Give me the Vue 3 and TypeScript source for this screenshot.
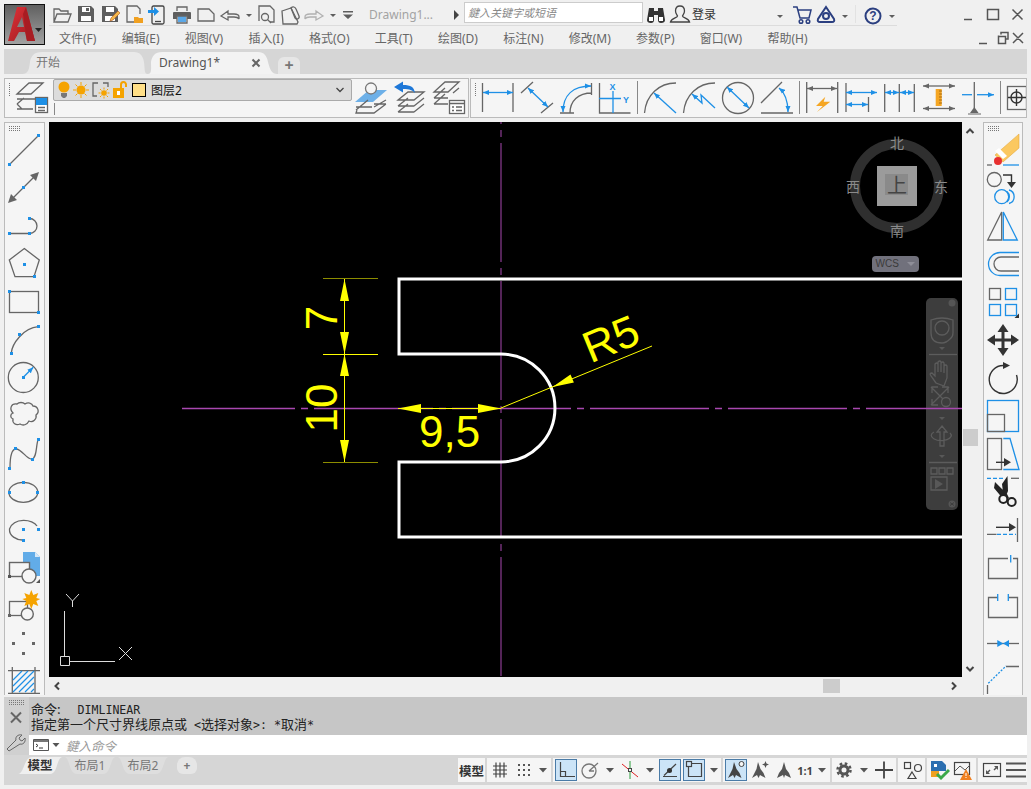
<script setup lang="ts">
const menus = ['文件(F)', '编辑(E)', '视图(V)', '插入(I)', '格式(O)', '工具(T)', '绘图(D)', '标注(N)', '修改(M)', '参数(P)', '窗口(W)', '帮助(H)']
</script>

<template>
  <div class="app">
    <svg class="defs" width="0" height="0">
      <defs>
        <marker id="ah" markerUnits="userSpaceOnUse" markerWidth="6" markerHeight="6" refX="6" refY="3" orient="auto-start-reverse">
          <path d="M0 0.5L6 3L0 5.5z" fill="#1e90e6" />
        </marker>
        <marker id="ag" markerUnits="userSpaceOnUse" markerWidth="6" markerHeight="6" refX="6" refY="3" orient="auto-start-reverse">
          <path d="M0 0.5L6 3L0 5.5z" fill="#666" />
        </marker>
        <linearGradient id="red" x1="0" y1="0" x2="1" y2="1">
          <stop offset="0" stop-color="#e03238" />
          <stop offset="1" stop-color="#9c1a20" />
        </linearGradient>
      </defs>
    </svg>

    <div class="head">
      <div class="appbtn">
        <svg width="39" height="39" viewBox="0 0 39 39">
          <path fill="url(#red)" fill-rule="evenodd" d="M12 2h9l9 34h-8l-2-9h-6l-5 9H3zM17 12l-5 10h7z" />
          <path fill="#a81c22" d="M21 2l9 34h-8L18 9z" />
          <path fill="#222" d="M30 23h7l-3.500 4z" />
        </svg>
      </div>
      <div class="head-right">
        <div class="titlebar">
          <div class="tb-main">
            <svg class="q" viewBox="0 0 24 24"><path class="k" d="M4 20V7h5l2 2h7v3M4 20l3-8h14l-3 8z" /></svg>
            <svg class="q" viewBox="0 0 24 24"><path class="fk2" d="M4 4h13l3 3v13H4z" /><path fill="#fff" d="M8 5h8v5H8zM7 14h10v5H7z" /><path class="fk2" d="M12 6h3v3h-3z" /></svg>
            <svg class="q" viewBox="0 0 24 24"><path class="fk2" d="M4 4h13l3 3v13H4z" /><path fill="#fff" d="M8 5h8v5H8zM7 14h10v5H7z" /><path fill="#f5b84a" stroke="#b05a20" stroke-width=".6" d="M13 16l7-7 2 2-7 7-3 1z" /></svg>
            <svg class="q" viewBox="0 0 24 24"><path class="k" d="M13 20H5V4h10l3 3v5" /><path fill="#f0a020" d="M12 15h4l1 1h4v5h-9z" /></svg>
            <svg class="q" viewBox="0 0 24 24"><rect class="d1" x="6" y="4" width="12" height="18" rx="1.500" /><path class="d1" d="M9 19.500h6" /><path fill="#1e90e6" d="M2 8h6V5l5 4.500-5 4.500v-3H2z" /></svg>
            <svg class="q" viewBox="0 0 24 24"><path class="fk2" d="M4 10h16q1 0 1 1v6h-4v-3H7v3H3v-6q0-1 1-1z" /><path class="k" d="M7 9V5h10v4" /><path fill="#5aa8e8" d="M8 14h8v6H8z" /><path class="k" d="M7 14h10v7H7z" /></svg>
            <svg class="q" viewBox="0 0 24 24"><path class="k" d="M4 7h11l5 5v7H4z" /></svg>
            <svg class="q" viewBox="0 0 24 24"><path class="k" d="M3 14l7-5v3h6c3 0 5 1 5 3v2c-1-2-2-2-5-2h-6v3z" /></svg>
            <svg class="dd" viewBox="0 0 10 24"><path class="fk2" d="M2 12h6l-3 3z" /></svg>
            <svg class="q" viewBox="0 0 24 24"><path class="k" d="M5 19V4h11l4 4v12h-4" /><circle class="k" cx="11" cy="15" r="3.500" /><path class="k" d="M13.500 17.500l3.500 3.500" /></svg>
            <svg class="q" viewBox="0 0 24 24"><path class="k" d="M4 9l9-3 7 14-1 2H5z" /><path class="k" d="M13 6c2-2 4-1 5 1l3 7c1 3-3 4-4 2z" /></svg>
            <svg class="q faint" viewBox="0 0 24 24"><path class="k" d="M21 14l-7-5v3H8c-3 0-5 1-5 3v2c1-2 2-2 5-2h6v3z" /></svg>
            <svg class="dd" viewBox="0 0 10 24"><path class="fk2" d="M2 12h6l-3 3z" /></svg>
            <svg class="more" viewBox="0 0 16 24"><path class="fk2" d="M3 9h10v1.500H3zM3 12.500h10L8 17z" /></svg>
            <span class="doc-title">Drawing1...</span>
            <svg class="arrow" viewBox="0 0 10 24"><path fill="#444" d="M3 8l5 5-5 5z" /></svg>
            <div class="search">鍵入关键字或短语</div>
            <svg class="q ml1" viewBox="0 0 24 24"><path fill="#333" d="M5 6h5v3h4V6h5l2 12q0 3-4 3-3 0-3-3v-5h-4v5q0 3-3 3-4 0-4-3z" /><path fill="#fff" d="M5 15h4v4H5zM15 15h4v4h-4z" /></svg>
            <svg class="q" viewBox="0 0 24 24"><path class="d1" d="M12 4c-3 0-4.500 2-4.500 5 0 2.500 1.500 4 2 5 0 2-6 2-7 6h19c-1-4-7-4-7-6 .5-1 2-2.500 2-5 0-3-1.500-5-4.500-5z" /></svg>
            <span class="login">登录</span>
            <svg class="dd login-dd" viewBox="0 0 10 24"><path class="fk2" d="M2 13h6l-3 3z" /></svg>
            <svg class="q ml5" viewBox="0 0 24 24"><path class="n" d="M3 5h4l3 11h9l2-8H8" /><circle class="n" cx="11" cy="19.500" r="1.800" /><circle class="n" cx="18" cy="19.500" r="1.800" /></svg>
            <svg class="q" viewBox="0 0 24 24"><path class="n2" d="M12 5l8 12q1 3-2 3H6q-3 0-2-3z" /><circle class="n2" cx="12" cy="14" r="3" /></svg>
            <svg class="dd" viewBox="0 0 10 24"><path class="fk2" d="M2 13h6l-3 3z" /></svg>
            <span class="tb-sep"></span>
            <svg class="q" viewBox="0 0 24 24"><circle class="n2" cx="12" cy="14" r="7.500" /><text x="12" y="18" class="help">?</text></svg>
            <svg class="dd" viewBox="0 0 10 24"><path class="fk2" d="M2 13h6l-3 3z" /></svg>
          </div>
          <svg class="winbtns" width="137" height="26" viewBox="0 0 137 26">
            <path class="w" d="M67 19.500h8M90.500 9.500h11v10h-11zM115.500 9.500l10 10M125.500 9.500l-10 10" />
          </svg>
        </div>
        <div class="menubar">
          <span v-for="m in menus" :key="m" class="menu">{{ m }}</span>
          <svg class="mdi" width="54" height="23" viewBox="0 0 54 23">
            <path class="w" d="M4 17.500h8M23.500 10.500h7v7h-7zM23.500 10.500v-1M26 8.500v-2h7v6.500h-2.500M38 7l10 10M48 7l-10 10" />
          </svg>
        </div>
      </div>
    </div>

    <div class="tabs">
      <div class="tab tab-start">开始</div>
      <div class="tab tab-active">
        <span>Drawing1*</span>
        <svg class="tab-x" width="10" height="10" viewBox="0 0 10 10"><path d="M1.500 1.500l7 7M8.500 1.500l-7 7" stroke="#666" stroke-width="2" /></svg>
      </div>
      <div class="tab tab-plus">+</div>
    </div>

    <div class="toolbars">
      <div class="tpanel tp1">
        <span class="vgrip"></span>
        <svg class="big ml5" viewBox="0 0 32 36">
          <path class="k" d="M1 14L13 3h14L15 14zM1 19h14M1 24L8 18M15 19h4M1 29h16M1 24l5 5" />
          <rect class="kf" x="19.500" y="17.500" width="12" height="15" />
          <rect x="20" y="18" width="11" height="7" fill="#1e90e6" />
          <path class="k" d="M22 27.500h7M29 30.500h-7" />
        </svg>
        <div class="layer-col">
          <div class="combo">
            <svg width="12" height="18" viewBox="0 0 12 18"><circle cx="6" cy="6" r="5.500" fill="#f5a300" /><path fill="#777" d="M3 12h6v3l-2 2H5l-2-2z" /></svg>
            <svg width="16" height="18" viewBox="0 0 16 18"><circle cx="8" cy="9" r="4.500" fill="#f5a300" /><path d="M8 1v3M8 14v3M0 9h3M13 9h3M2.500 3.500l2 2M11.500 12.500l2 2M13.500 3.500l-2 2M4.500 12.500l-2 2" stroke="#f5a300" fill="none" /></svg>
            <svg width="18" height="18" viewBox="0 0 18 18"><path class="k" d="M6 2H1v13h4M11 2h5v4" /><circle cx="12" cy="12" r="2.800" fill="#f5a300" /><path d="M12 6.500v2M12 15.500v2M6.500 12h2M15.500 12h2M8 8l1.500 1.500M16 8l-1.500 1.500M8 16l1.500-1.500M16 16l-1.500-1.500" stroke="#f5a300" fill="none" /></svg>
            <svg width="14" height="18" viewBox="0 0 14 18"><rect x="0" y="7" width="11" height="10" fill="#f5a300" /><rect x="4" y="10" width="3" height="4" fill="#fff" /><path d="M8 7V3.500a2.500 2.500 0 0 1 5 0V6" stroke="#f5a300" stroke-width="2" fill="none" /></svg>
            <span class="swatch"></span>
            <span class="layer-name">图层2</span>
            <svg class="chev" width="10" height="8" viewBox="0 0 10 8"><path d="M1.500 2l3.500 3.500L8.500 2" stroke="#444" stroke-width="1.300" fill="none" /></svg>
          </div>
          <span class="combo-line"></span>
        </div>
        <svg class="big ml3" viewBox="0 0 32 36">
          <path d="M0 22L14 10h18L18 22z" fill="#6db0e8" />
          <circle cx="16" cy="8.500" r="5.500" fill="#f5f5f5" stroke="#777" stroke-width="1.300" />
          <path class="k" d="M1 30L13 20M19 24h12M31 24L19 33H1l1-3M1 27h16M19 27L31 20" />
        </svg>
        <svg class="big ml7" viewBox="0 0 32 36">
          <path class="k" d="M4 20L14 12h16L20 20H4zM4 26L14 18M20 26h-16M30 18L20 26M4 32L14 24M20 32H4M30 24L20 32" />
          <path d="M0 7l9-5.500v3.500c8 0 11 2 12 8-3-3-5-4-12-4v3.500z" fill="#1e78d8" />
        </svg>
        <svg class="big ml7" viewBox="0 0 32 36">
          <path class="k" d="M1 12L12 2h14L15 12zM1 18L12 8M15 18H1M26 8l-6 5M1 24L12 14M15 24H1" />
          <rect class="kf" x="16.500" y="20.500" width="15" height="13" />
          <path class="k" d="M16.500 23.500h15M19 27h2M23 27h6M19 30.500h2M23 30.500h6" />
        </svg>
      </div>

      <div class="tpanel tp2">
        <span class="vgrip"></span>
        <div class="dims">
          <svg class="big cell" viewBox="0 0 32 36"><path class="k" d="M0.500 3v29M31 3v29" /><path class="u" d="M1 12.500h30" marker-start="url(#ah)" marker-end="url(#ah)" /></svg>
          <svg class="big cell" viewBox="0 0 32 36"><path class="k" d="M0 13L12 2M20 33l12-10" /><path class="u" d="M7 8l20 19" marker-start="url(#ah)" marker-end="url(#ah)" /></svg>
          <svg class="big cell" viewBox="0 0 32 36"><path class="k" d="M0 33h14M31.500 3v12M10 33c0-12 8-20 22-20" /><path class="u" d="M3 32C3 15 13 6 31 6" marker-start="url(#ah)" marker-end="url(#ah)" /></svg>
          <svg class="big cell" viewBox="0 0 32 36"><path class="k" d="M0.500 3v30h31" /><path class="u" d="M14 11v22M0 18.500h22" /><text x="10.500" y="10" class="axis">X</text><text x="24" y="23" class="axis">Y</text></svg>
          <span class="bar"></span>
          <svg class="big cell" viewBox="0 0 32 36"><path class="k" d="M0.500 33C2 15 15 3 32 3" /><path class="u" d="M10 13l22 20" marker-start="url(#ah)" /></svg>
          <svg class="big cell" viewBox="0 0 32 36"><path class="k" d="M0.500 33C2 15 15 3 32 3" /><path class="u" d="M9 14l10 9-1-8 14 13" marker-start="url(#ah)" /></svg>
          <svg class="big cell" viewBox="0 0 32 36"><circle class="k" cx="16" cy="18" r="15.500" /><path class="u" d="M5 7l22 21" marker-start="url(#ah)" marker-end="url(#ah)" /></svg>
          <svg class="big cell" viewBox="0 0 32 36"><path class="k" d="M0 23L21 2M0 33h32" /><path class="u" d="M18 8c6 5 9 13 9 24" marker-start="url(#ah)" marker-end="url(#ah)" /></svg>
          <span class="bar"></span>
          <svg class="big cell" viewBox="0 0 32 36"><path class="k" d="M0.700 2v31M31.700 2v31" /><path class="k" d="M1 8.500h30" marker-start="url(#ag)" marker-end="url(#ag)" /><path d="M19.300 16.700L10 26h6.700L11 32l13.300-10.300h-6.600z" fill="#f5a623" /></svg>
          <svg class="big cell" viewBox="0 0 32 36"><path class="k" d="M1 3v29M23.500 17v15" /><path class="u" d="M1 12.500h31" marker-start="url(#ah)" marker-end="url(#ah)" /><path class="u" d="M1 24.500h22" marker-start="url(#ah)" marker-end="url(#ah)" /></svg>
          <svg class="big cell" viewBox="0 0 32 36"><path class="k" d="M0.700 4v28M15.300 4v28M30.300 4v28" /><path class="u" d="M1 12.500h14" marker-start="url(#ah)" marker-end="url(#ah)" /><path class="u" d="M16 12.500h14" marker-start="url(#ah)" marker-end="url(#ah)" /></svg>
          <svg class="big cell" viewBox="0 0 32 36"><path class="k" d="M0 6h32" marker-start="url(#ag)" marker-end="url(#ag)" /><path class="k" d="M0 28.500h32" marker-start="url(#ag)" marker-end="url(#ag)" /><rect x="12.700" y="9" width="6" height="17" fill="#f5a623" /><path d="M16 11h3M16 14h3M16 17h3M16 20h3M16 23h3" stroke="#a86a10" /></svg>
          <svg class="big cell" viewBox="0 0 32 36"><path class="k" d="M12.300 2v26" /><path class="u" d="M0 14.700h10" /><path class="u" d="M15 14.700h17" marker-end="url(#ah)" /><path d="M8 33l4.300-6 4.300 6zM6 33.500h13v1H6z" fill="#666" /></svg>
          <span class="bar"></span>
          <svg class="big cell" viewBox="0 0 32 36"><rect class="k" x="0.500" y="6.500" width="19" height="23" /><circle class="dk" cx="9.500" cy="17.500" r="5.500" /><path class="dk" d="M1 17.500h18M9.500 9v17" /></svg>
        </div>
      </div>
    </div>

    <div class="main">
      <div class="side side-left">
        <div class="grip"></div>
        <svg class="ti" viewBox="0 0 32 32"><path class="k" d="M1.500 30.500l29-29" /><path class="fu" d="M0 29h3v3H0zM29 0h3v3h-3z" /></svg>
        <svg class="ti" viewBox="0 0 32 32"><path class="k" d="M5 26L26 5" /><path class="fk" d="M0 31l3-9 6 6zM31 0l-3 9-6-6z" /><path class="fu" d="M14 14h3v3h-3z" /></svg>
        <svg class="ti" viewBox="0 0 32 32"><path class="k" d="M1 23.500h20.500M21.500 8.500a7.500 7.500 0 0 1 0 15" /><path class="fu" d="M0 22h3v3H0zM20 22h3v3h-3zM20 7h3v3h-3z" /></svg>
        <svg class="ti" viewBox="0 0 32 32"><path class="k" d="M16.300 0.500L31.300 12 26 28.700H7L1.300 12z" /><path class="fu" d="M15 15h3v3h-3zM25 27h3v3h-3z" /></svg>
        <svg class="ti" viewBox="0 0 32 32"><rect class="k" x="1.500" y="5.500" width="29" height="21" /><path class="fu" d="M0 4h3v3H0zM29 25h3v3h-3z" /></svg>
        <svg class="ti" viewBox="0 0 32 32"><path class="k" d="M3.300 29C4 20 15 4 30.300 2.700" /><path class="fu" d="M2 28h3v3H2zM10 9h3v3h-3zM29 1h3v3h-3z" /></svg>
        <svg class="ti" viewBox="0 0 32 32"><circle class="k" cx="15.300" cy="15.500" r="15" /><path class="u" d="M15.300 15.300l10-10" marker-end="url(#ah)" /><path class="fu" d="M14 14h3v3h-3z" /></svg>
        <svg class="ti" viewBox="0 0 32 32"><path class="k" d="M5 13C1 9 3 3 9 4c2-2 6-2 8 0 3-2 7-1 8 2 5 0 7 6 3 9 1 4-3 8-7 6-2 4-6 5-9 3-4 2-8-1-7-5-3-1-3-5 0-6z" /></svg>
        <svg class="ti" viewBox="0 0 32 32"><path class="k" d="M2 30C2 22 3 11 8 11c6 0 11 11 16 10 5-1 4-14 6-19" /><path class="fu" d="M0 29h3v3H0zM6 9h3v3H6zM23 20h3v3h-3zM29 0h3v3h-3z" /></svg>
        <svg class="ti" viewBox="0 0 32 32"><ellipse class="k" cx="15.300" cy="16.300" rx="14.500" ry="10" /><path class="fu" d="M14 5h3v3h-3zM0 15h3v3H0zM28 15h3v3h-3z" /></svg>
        <svg class="ti" viewBox="0 0 32 32"><path class="k" d="M29 12C25 5 6 3 1.500 15c-.5 7 7 11 13 11" /><path class="fu" d="M14 14h3v3h-3zM29 14h3v3h-3zM14 25h3v3h-3z" /></svg>
        <svg class="ti" viewBox="0 0 32 32"><path d="M15 0h12l5 5v19H15z" fill="#62ace8" /><path d="M27 0l5 5h-5z" fill="#d6e8f8" /><rect x="1.500" y="10.500" width="20" height="14" fill="#f5f5f5" stroke="#666" stroke-width="1.400" /><circle cx="21" cy="24" r="7" fill="#f5f5f5" stroke="#666" stroke-width="1.400" /><path fill="#555" d="M0 23h3v3H0zM32 27v4h-4z" /></svg>
        <svg class="ti" viewBox="0 0 32 32"><rect class="k" x="1.500" y="11.500" width="18" height="14" /><circle cx="19.300" cy="24" r="6" fill="#f5f5f5" stroke="#666" stroke-width="1.400" /><path d="M23.300 0l2 5 5-2-2 5 4 1-4 2 2 5-5-2-2 5-2-5-5 2 2-5-4-2 4-1-2-5 5 2z" fill="#f5a300" /><path class="fk" d="M0 24h3v3H0z" /></svg>
        <svg class="ti" viewBox="0 0 32 32"><path class="fk" d="M14 4h3v3h-3zM4 14h3v3H4zM24 14h3v3h-3zM14 24h3v3h-3z" /></svg>
        <svg class="ti" viewBox="0 0 32 32">
          <path class="k" d="M4.300 1v27M27 1v27M0 4.700h32M0 27.300h32" />
          <path d="M5 14L14 5M5 20L20 5M5 26L26 5M11 26L26 11M17 26l9-9M23 26l3-3" stroke="#1e90e6" stroke-width="1.200" />
        </svg>
      </div>

      <div class="center">
        <div class="canvas-row">
          <svg class="canvas" width="913" height="555" viewBox="49 122 913 555">
            <rect x="49" y="122" width="913" height="555" fill="#000" />

            <g class="nav">
              <rect x="926" y="298" width="32" height="212" rx="5" fill="#3d3d3d" />
              <circle cx="952" cy="303" r="3.500" fill="#555" />
              <circle cx="952" cy="504" r="3.500" fill="#555" />
              <path class="nv2" d="M950 502.500l4 3M954 502.500l-4 3" />
              <path class="nv" d="M931 320q11-4 22 0v13q0 4-3 6-4 4-8 4-11 0-11-10z" />
              <circle class="nv" cx="942" cy="328" r="7" />
              <path fill="#585858" d="M939 347h6l-3 3z" />
              <path class="nv" d="M929 354.500h28" />
              <path class="nv" d="M936 383l-5-7q-2-3 1-3l3 3v-12q2-2 3 0v8-10q2-2 3 0v10-9q2-2 3 0v10-7q2-2 3 0v12l-3 8z" />
              <path class="nv" d="M931 387l18 18M949 387l-18 18M932 393v-6h6M948 393v-6h-6M932 399v6h6" />
              <circle class="nvf" cx="946" cy="402" r="4.500" />
              <path fill="#585858" d="M939 417h6l-3 3z" />
              <path class="nv" d="M942 426l5 6h-3v14h-4v-14h-3zM934 432a10 5 0 1 0 16 1" />
              <path fill="#585858" d="M939 455h6l-3 3z" />
              <path class="nv" d="M929 462.500h28M931 468h6v6h-6zM939 468h6v6h-6zM947 468h6v6h-6zM931 477h16v13h-16z" />
              <path fill="#585858" d="M935 479l8 5-8 5z" />
            </g>

            <path class="cl" stroke-dasharray="119 6 7 6" stroke-dashoffset="6" d="M182 408.500H962" />
            <path class="cl2" stroke-dasharray="119 6 7 6" d="M501 5V677" />

            <path class="part" d="M962 279H399V354H501A54 54 0 0 1 501 462H399V537H962" />

            <g class="dim">
              <path class="ext" d="M323 278.500h55M323 462.500h55" />
              <path class="dl" d="M323 354.500h55M344.500 279V462M398 408.500H501M501 408L652 346" />
              <path class="ah" d="M344.500 279l4.500 22h-9zM344.500 354l4.500-22h-9zM344.500 354l4.500 22h-9zM344.500 462l4.500-22h-9zM398 408.500l23-4.500v9zM501 408.500l-23-4.500v9zM552.500 387l18-12.400 3.400 8z" />
              <text class="dt" x="419" y="447">9,5</text>
              <text class="dt" transform="translate(337 318) rotate(-90)" text-anchor="middle">7</text>
              <text class="dt" transform="translate(337 408) rotate(-90)" text-anchor="middle">10</text>
              <text class="dt" transform="translate(590.500 363.500) rotate(-22.300)">R5</text>
            </g>

            <g class="cube">
              <circle cx="897" cy="186" r="42" fill="none" stroke="#2f2f2f" stroke-width="10" />
              <rect x="877" y="166" width="40" height="40" fill="#9b9b9b" />
              <rect x="885" y="174" width="23" height="21" fill="#8a8a8a" />
              <text x="897" y="193" class="cube-top">上</text>
              <text x="897" y="148" class="cube-t">北</text>
              <text x="941" y="192" class="cube-t">东</text>
              <text x="897" y="236" class="cube-t">南</text>
              <text x="853" y="192" class="cube-t">西</text>
              <rect x="872" y="256" width="47" height="16" rx="4" fill="#71717c" />
              <text x="875.500" y="267" class="wcs">WCS</text>
              <path fill="#8e8e98" d="M907 262h8l-4 4z" />
            </g>

            <g class="ucs">
              <path d="M64.500 611v45M70 661.500h45M60.500 656.500h9v9h-9zM119 647l13 13M132 647l-13 13M66 594l6.500 7 6.500-7M72.500 601v6" />
            </g>
          </svg>
          <div class="vscroll">
            <svg width="16" height="18" viewBox="0 0 16 18"><path class="chv" d="M4.500 11l3.500-3.500L11.500 11" /></svg>
            <span class="v-thumb"></span>
            <svg class="sc-b" width="16" height="17" viewBox="0 0 16 17"><path class="chv" d="M4.500 7l3.500 3.500L11.500 7" /></svg>
          </div>
        </div>
        <div class="hscroll">
          <svg width="16" height="18" viewBox="0 0 16 18"><path class="chv" d="M10 5.500L6.500 9l3.500 3.500" /></svg>
          <span class="h-thumb"></span>
          <svg class="sc-r" width="16" height="18" viewBox="0 0 16 18"><path class="chv" d="M6 5.500L9.500 9 6 12.500" /></svg>
        </div>
      </div>

      <div class="side side-right">
        <div class="grip"></div>
        <svg class="ti" viewBox="0 0 32 32">
          <path d="M32 0v14L16 28l-8-7z" fill="#fbc860" stroke="#e0a030" stroke-width=".5" />
          <path d="M12 14l8 8-4 3-8-8z" fill="#fff" />
          <circle cx="11" cy="27" r="4" fill="#e83030" />
          <path class="k" d="M0 31h5" /><path class="u" d="M16 31h16" />
        </svg>
        <svg class="ti" viewBox="0 0 32 32">
          <circle class="k" cx="7.300" cy="7.500" r="7" />
          <path class="dk" d="M16 3h8.500v8" /><path fill="#333" d="M20 10h9l-4.500 6z" />
          <circle class="u" cx="14.700" cy="24.700" r="7" /><path class="u" d="M22 18a7 7 0 0 1 0 13.500M20 19.500a7 7 0 0 1 0 10.500" />
        </svg>
        <svg class="ti" viewBox="0 0 32 32"><path class="k" d="M14.700 2v28H.7z" /><path class="u" d="M16.300 2v28h14z" /></svg>
        <svg class="ti" viewBox="0 0 32 32"><path class="u" d="M32 4.500H13a11.500 11.500 0 0 0 0 23h19" /><path class="k" d="M32 9H14a7 7 0 0 0 0 14h18" /></svg>
        <svg class="ti" viewBox="0 0 32 32">
          <rect class="k" x="2.500" y="2.500" width="11" height="11" /><rect class="u" x="18.500" y="2.500" width="11" height="11" /><rect class="u" x="2.500" y="18.500" width="11" height="11" /><rect class="u" x="18.500" y="18.500" width="11" height="11" />
          <path fill="#333" d="M32 27.500V32h-4.500z" />
        </svg>
        <svg class="ti" viewBox="0 0 32 32">
          <path fill="#333" d="M16 0l5.500 8h-4v6.500H24v-4l8 5.500-8 5.500v-4h-6.500V24h4L16 32l-5.500-8h4v-6.500H8v4L0 16l8-5.500v4h6.500V8h-4z" />
        </svg>
        <svg class="ti" viewBox="0 0 32 32"><path class="dk" d="M17 3.500A14 14 0 1 0 29.500 13" /><path fill="#333" d="M16 0l7 3.500-7 3.500z" /></svg>
        <svg class="ti" viewBox="0 0 32 32"><rect class="u" x="0.500" y="0.500" width="31" height="31" /><rect class="k" x="0.500" y="14.500" width="17" height="17" /></svg>
        <svg class="ti" viewBox="0 0 32 32"><rect class="k" x="0.500" y="0.500" width="14" height="31" /><path class="u" d="M16.300.5H23l9 31H16.300" /><path class="dk" d="M9 24.300h9" /><path fill="#333" d="M17 20l7 4.300-7 4.300z" /></svg>
        <svg class="ti" viewBox="0 0 32 32">
          <path class="u" stroke-dasharray="4 2" d="M0 2.300h16" /><path class="k" d="M24 2.300h8" />
          <path d="M20.500 0L21 15l-2 5-3-4-1-8zM8 6l12 12 2 4-5 2L7 12z" fill="#222" />
          <circle cx="16.300" cy="23" r="4" fill="#f5f5f5" stroke="#222" stroke-width="2" /><circle cx="24.700" cy="26" r="4" fill="#f5f5f5" stroke="#222" stroke-width="2" />
        </svg>
        <svg class="ti" viewBox="0 0 32 32"><path class="k" d="M30.500 4v24M0 20.300h9.500" /><path class="u" stroke-dasharray="4 2" d="M10 20.300h19" /><path class="dk" d="M9 13.300h14" /><path fill="#333" d="M22 9l7 4.300-7 4.300z" /></svg>
        <svg class="ti" viewBox="0 0 32 32"><path class="k" d="M21 6.500H1.500v20h29v-20H26" /><path class="u" d="M23.700 3v7.500" /></svg>
        <svg class="ti" viewBox="0 0 32 32"><path class="k" d="M10.700 7.500H1.500v20h29v-20h-9" /><path class="u" d="M10.700 4v7M21.300 4v7" /></svg>
        <svg class="ti" viewBox="0 0 32 32"><path class="k" d="M0 15.500h32" /><path class="fu" d="M10.300 12l6 3.500-6 3.500zM22 12l-6 3.500 6 3.500z" /></svg>
        <svg class="ti" viewBox="0 0 32 32"><path class="k" d="M19 0.500h13M0.500 19v9" /><path class="u" stroke-dasharray="2 1.500" d="M1.300 17.300L19 0" /></svg>
      </div>
    </div>

    <div class="cmd">
      <div class="cmd-side">
        <div class="grip grip-cmd"></div>
        <svg width="25" height="15" viewBox="0 0 25 15"><path d="M7 2.500l10 10M17 2.500l-10 10" stroke="#666" stroke-width="2" /></svg>
        <svg class="wrench" width="25" height="18" viewBox="0 0 25 18"><path d="M5 17l-2-2 9-9c-1-3 2-6 6-5l-3 3 1 2 2 1 3-3c1 4-2 7-5 6z" fill="none" stroke="#666" /></svg>
      </div>
      <div class="cmd-body">
        <div class="cmd-hist">
          <div class="h-line">命令: <span class="lat">&nbsp;&nbsp;DIMLINEAR</span></div>
          <div class="h-line">指定第一个尺寸界线原点或<span class="lat"> &lt;</span>选择对象<span class="lat">&gt;:</span><span class="lat"> *</span>取消<span class="lat">*</span></div>
        </div>
        <div class="cmd-input">
          <svg width="16" height="12" viewBox="0 0 16 12"><path d="M.5.500h15v11H.5z" fill="#fff" stroke="#555" /><path d="M1 1h14v2H1z" fill="#777" /><path d="M3 5l2 1.500L3 8M6 9h4" fill="none" stroke="#333" /></svg>
          <svg class="in-dd" width="10" height="8" viewBox="0 0 10 8"><path d="M1.500 2h7L5 6z" fill="#555" /></svg>
          <span class="placeholder">鍵入命令</span>
        </div>
      </div>
    </div>

    <div class="status">
      <div class="stabs">
        <div class="stab stab-on">模型</div>
        <div class="stab">布局1</div>
        <div class="stab">布局2</div>
        <div class="stab stab-plus">+</div>
      </div>
      <div class="sgroups">
        <div class="sg sg-a"><span class="model">模型</span></div>
        <div class="sg sg-b">
          <svg class="st wide" viewBox="0 0 24 22"><path class="s" d="M5 7h14M5 11h14M5 15h14M8 3.500v15M12 3.500v15M16 3.500v15" /></svg>
          <svg class="st wide" viewBox="0 0 24 22"><path fill="#555" d="M6 5h2v2H6zM11 5h2v2h-2zM16 5h2v2h-2zM6 10h2v2H6zM11 10h2v2h-2zM16 10h2v2h-2zM6 15h2v2H6zM11 15h2v2h-2zM16 15h2v2h-2z" /></svg>
          <svg class="sdd" viewBox="0 0 14 22"><path fill="#555" d="M3 9h8l-4 4.500z" /></svg>
        </div>
        <div class="sg sg-c">
          <svg class="st on" viewBox="0 0 22 22"><path class="s" d="M5.500 3v14.500H20M5.500 12.500h5v5" /></svg>
          <svg class="st" viewBox="0 0 22 22"><circle class="s2" cx="10" cy="12" r="7" /><path class="s2" d="M10 12l9-8M10 12h5" /></svg>
          <svg class="sdd" viewBox="0 0 14 22"><path fill="#555" d="M3 9h8l-4 4.500z" /></svg>
          <svg class="st" viewBox="0 0 22 22"><path d="M11 2v18" stroke="#2a9d3a" /><path d="M3 5l16 13" stroke="#d22" /><rect x="9.500" y="9.500" width="3" height="3" fill="#f5f5f5" stroke="#444" /></svg>
          <svg class="sdd" viewBox="0 0 14 22"><path fill="#555" d="M3 9h8l-4 4.500z" /></svg>
          <svg class="st on" viewBox="0 0 22 22"><path class="s" d="M4 17.500h14M5 16.500L17 5" /><circle cx="10.500" cy="11.500" r="2.500" fill="#333" /></svg>
          <svg class="st on" viewBox="0 0 22 22"><path class="s" d="M8.500 4.500h10v13h-13v-10" /><rect class="s" x="3.500" y="2.500" width="5" height="5" /></svg>
          <svg class="sdd" viewBox="0 0 14 22"><path fill="#555" d="M3 9h8l-4 4.500z" /></svg>
        </div>
        <div class="sg sg-d">
          <svg class="st on" viewBox="0 0 22 22"><path fill="#444" d="M9 3l2.500 7 3 4 2 5-5.500-3-1.500 3L8 16l-5 3 2.500-5 2-4z" /><circle cx="16.500" cy="5" r="2.500" fill="#f5f5f5" stroke="#444" /></svg>
          <svg class="st" viewBox="0 0 22 22"><path fill="#555" d="M9 3l2.500 7 3 4 2 5-5.500-3-1.500 3L8 16l-5 3 2.500-5 2-4z" /><path d="M16.500 2l1 2.500 2.500 1-2.500 1-1 2.500-1-2.500-2.500-1 2.500-1z" fill="#555" /></svg>
          <svg class="st" viewBox="0 0 22 22"><path fill="#555" d="M11 3l2 7 3 4 2 5-6-3-1 3-1-3-6 3 2-5 3-4z" /></svg>
          <span class="ratio">1:1</span>
          <svg class="sdd" viewBox="0 0 14 22"><path fill="#555" d="M3 9h8l-4 4.500z" /></svg>
        </div>
        <div class="sg sg-e">
          <svg class="st" viewBox="0 0 22 22"><circle cx="11" cy="11" r="4" fill="none" stroke="#555" stroke-width="3" /><circle cx="11" cy="11" r="6.500" fill="none" stroke="#555" stroke-width="2.500" stroke-dasharray="2.550" /></svg>
          <svg class="sdd" viewBox="0 0 14 22"><path fill="#555" d="M3 9h8l-4 4.500z" /></svg>
          <svg class="st" viewBox="0 0 22 22"><path d="M2 11h18M11 2.500v17" stroke="#444" stroke-width="1.800" /></svg>
        </div>
        <div class="sg sg-f">
          <svg class="st" viewBox="0 0 22 22"><rect class="s" x="3.500" y="3.500" width="6" height="6" /><circle class="s" cx="17" cy="9" r="3.500" /><path class="s" d="M11 13l4 6.500H7z" /></svg>
        </div>
        <div class="sg sg-g">
          <svg class="st" viewBox="0 0 22 22"><path d="M3 2h11l4 4v6H3z" fill="#2c6fb0" /><path d="M3 12h8v6H3z" fill="#eea020" /><path fill="#fff" d="M6 5h3v3H6z" /><path d="M9 15l4 4 8-8" fill="none" stroke="#3aa848" stroke-width="3" /></svg>
          <svg class="st" viewBox="0 0 22 22"><rect class="s" x="2.500" y="3.500" width="15" height="12" /><path d="M3 12l5-5 5 4 5-5" fill="none" stroke="#555" /><path d="M14 10l6 11H8z" fill="#f08020" /><path d="M14 14v3M14 18v1" stroke="#fff" /></svg>
        </div>
        <div class="sg sg-h">
          <svg class="st" viewBox="0 0 22 22"><rect class="s" x="2.500" y="4.500" width="17" height="13" /><path fill="#555" d="M5 15v-4l1.500 1.500 2-2 1 1-2 2L9 15zM17 7v4l-1.500-1.500-2 2-1-1 2-2L13 7z" /></svg>
          <svg class="st" viewBox="0 0 22 22"><path d="M1 4.500h20M1 11h20M1 17.500h20" stroke="#555" stroke-width="2" /></svg>
        </div>
      </div>
    </div>
  </div>
</template>

<style>
html,
body {
  margin: 0;
  background: #f0f0f0;
}
</style>

<style scoped>
.app {
  position: relative;
  width: 1031px;
  height: 789px;
  overflow: hidden;
  background: #f0f0f0;
  font-family: "Noto Sans", "Noto Sans CJK SC", sans-serif;
  display: flex;
  flex-direction: column;
}

.defs {
  position: absolute;
}

svg {
  display: block;
  flex: none;
}

/* shared stroke styles for the icons */
.k { fill: none; stroke: #666; stroke-width: 1.3; }
.kf { fill: #fff; stroke: #666; stroke-width: 1.3; }
.dk { fill: none; stroke: #333; stroke-width: 1.4; }
.d1 { fill: none; stroke: #444; stroke-width: 1.3; }
.u { fill: none; stroke: #1e90e6; stroke-width: 1.3; }
.n { fill: none; stroke: #2b3f80; stroke-width: 1.5; }
.n2 { fill: none; stroke: #2b3f80; stroke-width: 2; }
.w { fill: none; stroke: #555; stroke-width: 1.500; }
.fu { fill: #1e90e6; }
.fk { fill: #666; }
.fk2 { fill: #5e5e5e; }
.s { fill: none; stroke: #444; stroke-width: 1.200; }
.s2 { fill: none; stroke: #777; stroke-width: 1.300; }

.head {
  display: flex;
  height: 49px;
}

.appbtn {
  width: 39px;
  height: 39px;
  margin: 4px 0 0 4px;
  border: 1px solid #111;
  background: linear-gradient(#606060, #a2a2a2);
}

.head-right {
  flex: 1;
  margin-left: 4px;
  min-width: 0;
}

.titlebar {
  display: flex;
  height: 26px;
}

.tb-main {
  flex: 1;
  display: flex;
  align-items: center;
  padding: 3px 0 0 1px;
  box-sizing: border-box;
  border-bottom: 1px solid #dcdcdc;
}

.q {
  width: 24px;
  height: 24px;
}

.dd {
  width: 10px;
  height: 24px;
  margin: 0 0 0 2px;
}

.faint {
  opacity: 0.45;
}

.more {
  width: 16px;
  height: 24px;
  margin-left: 2px;
}

.doc-title {
  width: 79px;
  margin-left: 13px;
  color: #a3a3a3;
  font-size: 12px;
  white-space: nowrap;
}

.arrow {
  width: 10px;
  height: 24px;
  margin-left: 3px;
}

.search {
  width: 179px;
  height: 21px;
  box-sizing: border-box;
  margin: -3px 0 0 3px;
  padding: 0 3px;
  border: 1px solid #ccc;
  background: #fff;
  color: #888;
  font-size: 11px;
  font-style: italic;
  line-height: 19px;
}

.ml1 { margin-left: 1px; }
.ml3 { margin-left: 3px; }
.ml5 { margin-left: 5px; }
.ml7 { margin-left: 7px; }

.login {
  width: 25px;
  color: #333;
  font-size: 12px;
}

.login-dd {
  margin-left: 58px;
}

.tb-sep {
  width: 1px;
  height: 18px;
  margin: 0 5px 0 5px;
  background: #e2e2e2;
}

.help {
  fill: #2b3f80;
  font-family: "Liberation Sans", sans-serif;
  font-size: 12px;
  font-weight: 700;
  text-anchor: middle;
}

.menubar {
  display: flex;
  align-items: center;
  gap: 25.25px;
  height: 23px;
  padding-left: 10px;
}

.menu {
  color: #666;
  font-size: 12px;
  white-space: nowrap;
}

.mdi {
  margin-left: auto;
  margin-right: 2px;
}

.tabs {
  display: flex;
  align-items: flex-end;
  height: 25px;
  margin: 0 4px;
  padding-left: 18px;
  background: #d6d6d6;
}

.tab {
  box-sizing: border-box;
  height: 22px;
  line-height: 22px;
  font-size: 12px;
}

.tab-start {
  width: 126px;
  padding-left: 14px;
  background: #e9e9e9;
  color: #777;
  clip-path: path("M0 22C7 22 7 16 8 10C9 4 12 0 20 0H112C118 0 121 4 122 10C123 18 122 22 126 22Z");
}

.tab-active {
  display: flex;
  align-items: center;
  width: 129px;
  padding-left: 11px;
  background: #f3f3f3;
  color: #555;
  clip-path: path("M0 22C4 22 3 16 3 10C4 4 7 0 14 0H110C116 0 119 4 120 10C122 18 124 22 129 22Z");
}

.tab-x {
  margin-left: 31px;
}

.tab-plus {
  width: 22px;
  height: 17px;
  margin-left: 1px;
  background: #e6e6e6;
  border-radius: 6px 6px 0 0;
  color: #777;
  font-size: 16px;
  font-weight: 700;
  line-height: 17px;
  text-align: center;
}

.toolbars {
  display: flex;
  gap: 1px;
  height: 40px;
  margin: 4px 4px 0;
  overflow: hidden;
}

.tpanel {
  box-sizing: border-box;
  display: flex;
  border: 1px solid #bbb;
  background: #f5f5f5;
  padding-left: 3px;
}

.tp1 {
  width: 465px;
  flex: none;
}

.tp2 {
  flex: 1;
  min-width: 0;
  overflow: hidden;
}

.vgrip {
  flex: none;
  width: 3px;
  height: 13px;
  margin-top: 4px;
  background-image: conic-gradient(#777 25%, transparent 0);
  background-size: 2px 2px;
}

.big {
  width: 32px;
  height: 36px;
  margin-top: 1px;
  overflow: visible;
}

.layer-col {
  display: flex;
  flex-direction: column;
  width: 299px;
  margin-left: 5px;
}

.combo {
  display: flex;
  align-items: center;
  gap: 3px;
  box-sizing: border-box;
  height: 22px;
  padding: 0 4px;
  border: 1px solid #aaa;
  border-radius: 2px;
  background: #dcdcdc;
}

.swatch {
  width: 12px;
  height: 12px;
  margin-left: 2px;
  border: 1px solid #000;
  background: #ffdf88;
}

.layer-name {
  margin-left: 2px;
  color: #111;
  font-size: 12px;
}

.chev {
  margin-left: auto;
  margin-right: 2px;
}

.combo-line {
  width: 1px;
  height: 12px;
  margin: 2px 0 0 1px;
  background: #888;
}

.dims {
  display: flex;
  margin-left: 1.5px;
}

.cell {
  margin: 1px 3.5px 0;
}

.bar {
  flex: none;
  width: 1px;
  height: 33px;
  margin: 2px 2.5px 0;
  background: #888;
}

.axis {
  fill: #1e90e6;
  font-family: "Liberation Sans", sans-serif;
  font-size: 9px;
  font-weight: 700;
}

.main {
  display: flex;
  height: 573px;
  margin-top: 4px;
}

.side {
  box-sizing: border-box;
  display: flex;
  flex-direction: column;
  flex: none;
  height: 573px;
  padding-top: 3px;
  overflow: hidden;
  border: 1px solid #bbb;
  border-bottom: 0;
  background: #f5f5f5;
}

.side-left {
  width: 41px;
  margin-left: 4px;
}

.side-right {
  width: 40px;
  margin-left: 1px;
}

.grip {
  flex: none;
  width: 13px;
  height: 5px;
  margin-left: 3px;
  background-image: conic-gradient(#777 25%, transparent 0);
  background-size: 2px 2px;
}

.ti {
  width: 32px;
  height: 32px;
  margin: 3px;
  overflow: visible;
}

.center {
  width: 933px;
  margin-left: 4px;
}

.canvas-row {
  display: flex;
  height: 555px;
}

.vscroll {
  flex: 1;
  display: flex;
  flex-direction: column;
}

.v-thumb {
  display: block;
  width: 15px;
  height: 17px;
  margin: 289px 0 0 1px;
  background: #ccc;
}

.sc-b {
  margin-top: auto;
}

.hscroll {
  display: flex;
  width: 913px;
  height: 18px;
}

.h-thumb {
  width: 17px;
  height: 14px;
  margin: 2px 0 0 758px;
  background: #ccc;
}

.sc-r {
  margin-left: auto;
}

.chv {
  fill: none;
  stroke: #444;
  stroke-width: 2;
}

.cl {
  fill: none;
  stroke: #a848b0;
  stroke-width: 1.3;
}

.cl2 {
  fill: none;
  stroke: #a848b0;
  stroke-width: 1;
}

.part {
  fill: none;
  stroke: #fff;
  stroke-width: 3;
}

.ext {
  fill: none;
  stroke: #8c8c00;
  stroke-width: 1;
}

.dl {
  fill: none;
  stroke: #ff0;
  stroke-width: 1;
}

.ah {
  fill: #ff0;
}

.dt {
  fill: #ff0;
  font-family: "Liberation Sans", sans-serif;
  font-size: 44px;
}

.cube-t {
  fill: #8a8a8a;
  font-family: "Noto Sans CJK SC", sans-serif;
  font-size: 14px;
  text-anchor: middle;
}

.cube-top {
  fill: #444;
  font-family: "Noto Sans CJK SC", sans-serif;
  font-size: 20px;
  text-anchor: middle;
}

.wcs {
  fill: #3a3a3a;
  font-family: "Liberation Sans", sans-serif;
  font-size: 10px;
}

.nv {
  fill: none;
  stroke: #5c5c5c;
  stroke-width: 1.300;
}

.nvf {
  fill: #3d3d3d;
  stroke: #5c5c5c;
  stroke-width: 1.300;
}

.nv2 {
  fill: none;
  stroke: #3d3d3d;
  stroke-width: 1;
}

.ucs path {
  fill: none;
  stroke: #ddd;
  stroke-width: 1;
}

.cmd {
  display: flex;
  height: 58px;
  margin: 2px 4px 0;
}

.cmd-side {
  flex: none;
  width: 25px;
  background: #d0d0d0;
}

.grip-cmd {
  width: 17px;
  margin: 3px 0 5px 4px;
}

.wrench {
  margin-top: 9px;
}

.cmd-body {
  flex: 1;
}

.cmd-hist {
  box-sizing: border-box;
  height: 38px;
  padding: 5px 0 0 2px;
  background: #c6c6c6;
  color: #222;
  font-family: "Noto Sans CJK SC", sans-serif;
  font-size: 13px;
  line-height: 14px;
}

.lat {
  font-family: "DejaVu Sans Mono", monospace;
  font-size: 11.6px;
}

.cmd-input {
  display: flex;
  align-items: center;
  height: 20px;
  padding-left: 4px;
  background: #fff;
}

.in-dd {
  margin-left: 2px;
}

.placeholder {
  margin-left: 5px;
  color: #999;
  font-family: "Noto Sans CJK SC", sans-serif;
  font-size: 12.500px;
  font-style: italic;
}

.status {
  display: flex;
  height: 30px;
  margin: 0 4px;
  background: #d6d6d6;
}

.stabs {
  display: flex;
  gap: 3px;
  height: 17px;
  margin: 2px 0 0 14px;
}

.stab {
  width: 50px;
  height: 17px;
  background: #dedede;
  color: #777;
  font-size: 12px;
  line-height: 17px;
  text-align: center;
  clip-path: path("M0 0H50C45 2 46 17 38 17H12C4 17 5 2 0 0Z");
}

.stab-on {
  width: 44px;
  background: #efefef;
  color: #333;
  font-size: 12.500px;
  font-weight: 700;
  clip-path: path("M0 17C6 17 6 0 14 0H44C38 2 40 17 32 17Z");
}

.stab-plus {
  width: 20px;
  margin-left: 6px;
  background: #e6e6e6;
  font-weight: 700;
  clip-path: none;
  border-radius: 8px 8px 6px 6px;
}

.sgroups {
  display: flex;
  gap: 2px;
  margin-left: auto;
  height: 24px;
  margin-top: 3px;
}

.sg {
  box-sizing: border-box;
  display: flex;
  align-items: center;
  gap: 2px;
  background: #f5f5f5;
}

.sg-a { width: 27px; justify-content: center; }
.sg-b { width: 64px; padding-left: 1px; gap: 0; }
.sg-c { width: 168px; padding-left: 2px; }
.sg-d { width: 107px; padding-left: 2px; }
.sg-e { width: 64px; padding-left: 1px; }
.sg-f { width: 27px; padding-left: 3px; }
.sg-g { width: 49px; padding-left: 1px; }
.sg-h { width: 49px; padding-left: 3px; }

.model {
  color: #333;
  font-size: 12.500px;
  font-weight: 700;
  white-space: nowrap;
}

.st {
  box-sizing: border-box;
  width: 22px;
  height: 22px;
}

.wide {
  width: 24px;
}

.on {
  background: #cce4f7;
  outline: 1px solid #4a7ba7;
  outline-offset: -1px;
}

.sdd {
  width: 14px;
  height: 22px;
}

.ratio {
  width: 16px;
  color: #444;
  font-size: 11px;
  font-weight: 700;
  text-align: center;
}
</style>
